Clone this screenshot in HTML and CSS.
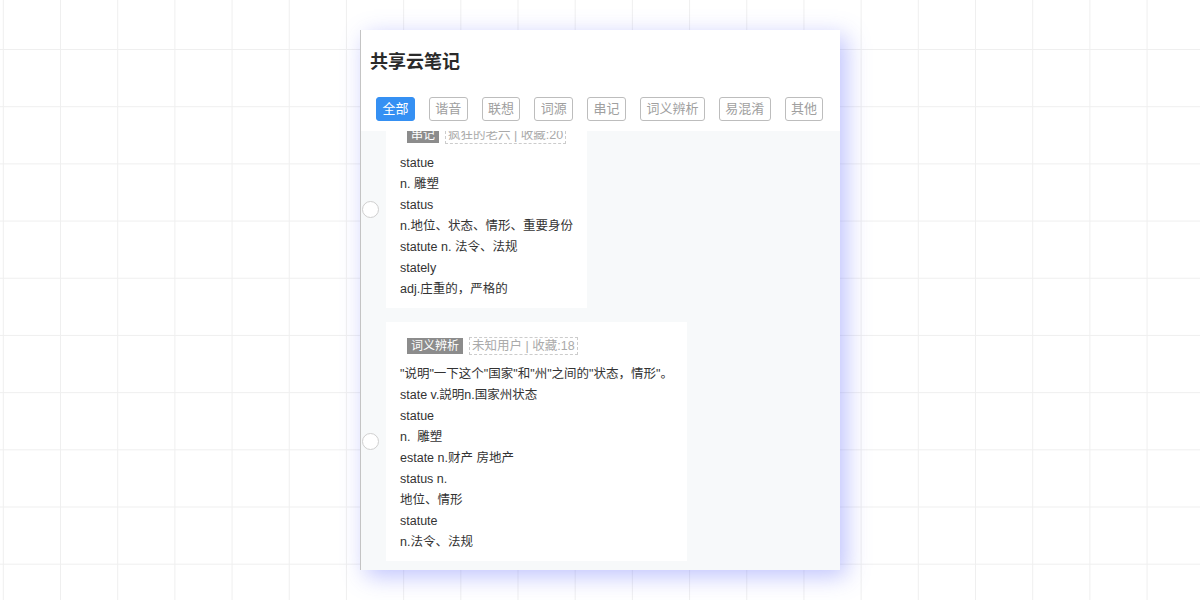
FILE: index.html
```html
<!DOCTYPE html>
<html lang="zh-CN">
<head>
  <meta charset="UTF-8" />
  <meta name="viewport" content="width=device-width, initial-scale=1.0" />
  <title>共享云笔记</title>
  <link rel="stylesheet" href="styles.css">
</head>
<body>
  <div class="panel">
    <div class="header">
      <h1 class="title">共享云笔记</h1>
      <div class="tabs">
        <span class="tab active">全部</span>
        <span class="tab">谐音</span>
        <span class="tab">联想</span>
        <span class="tab">词源</span>
        <span class="tab">串记</span>
        <span class="tab">词义辨析</span>
        <span class="tab">易混淆</span>
        <span class="tab">其他</span>
      </div>
    </div>

    <div class="content">
      <div class="list">
        <div class="row">
          <span class="radio"></span>
          <div class="card">
            <div class="meta">
              <span class="tag">串记</span>
              <span class="info">疯狂的老六 | 收藏:20</span>
            </div>
            <p>statue</p>
            <p>n. 雕塑</p>
            <p>status</p>
            <p>n.地位、状态、情形、重要身份</p>
            <p>statute n. 法令、法规</p>
            <p>stately</p>
            <p>adj.庄重的，严格的</p>
          </div>
        </div>

        <div class="row">
          <span class="radio"></span>
          <div class="card">
            <div class="meta">
              <span class="tag">词义辨析</span>
              <span class="info">未知用户 | 收藏:18</span>
            </div>
            <p>"说明"一下这个"国家"和"州"之间的"状态，情形"。</p>
            <p>state v.説明n.国家州状态</p>
            <p>statue</p>
            <p>n.&nbsp; 雕塑</p>
            <p>estate n.财产 房地产</p>
            <p>status n.</p>
            <p>地位、情形</p>
            <p>statute</p>
            <p>n.法令、法规</p>
          </div>
        </div>
      </div>
    </div>
  </div>
</body>
</html>
```

FILE: styles.css
```css
body {
  margin: 0;
  height: 600px;
  overflow: hidden;
  font-family: "Liberation Sans", "Noto Sans CJK SC", sans-serif;
  background-color: #ffffff;
  background-image:
    linear-gradient(to right, #efefef 1px, transparent 1px),
    linear-gradient(to bottom, #efefef 1px, transparent 1px);
  background-size: 57.2px 57.2px;
  background-position: 60px 49px;
}
.panel {
  width: 479px;
  height: 540px;
  margin: 30px auto 0 auto;
  background: #fff;
  border-left: 1px solid #c4c4c4;
  box-shadow: 6px 6px 22px rgba(110, 120, 250, 0.45);
  display: flex;
  flex-direction: column;
}
.header {
  background: #fff;
  padding: 20px 0 10px 0;
}
.title {
  margin: 0 0 0 9px;
  font-size: 18px;
  font-weight: 600;
  color: #2a2a2a;
  line-height: 24px;
}
.tabs {
  display: flex;
  gap: 14px;
  margin: 23px 0 0 15px;
}
.tab {
  font-size: 13px;
  line-height: 22px;
  padding: 0 5.4px;
  border: 1px solid #bdbdbd;
  border-radius: 3px;
  color: #a0a0a0;
}
.tab.active {
  background: #3590f3;
  border-color: #3590f3;
  color: #fff;
}
.content {
  flex: 1;
  background: #f7f9fa;
  overflow: hidden;
}
.list {
  margin-top: -20px;
  display: flex;
  flex-direction: column;
  gap: 14px;
}
.row {
  display: flex;
  align-items: center;
  gap: 7px;
}
.radio {
  width: 15px;
  height: 15px;
  margin-left: 1px;
  border: 1px solid #cfcfcf;
  border-radius: 50%;
  background: #fff;
}
.card {
  background: #fff;
  padding: 15px 14px 8px 14px;
}
.meta {
  display: flex;
  align-items: center;
  gap: 6px;
  margin: 0 0 9px 7px;
  height: 18px;
}
.tag {
  background: #8c8c8c;
  color: #fff;
  font-size: 12px;
  line-height: 16px;
  padding: 0 4px;
}
.info {
  border: 1px dashed #cccccc;
  color: #aaaaaa;
  font-size: 12.5px;
  line-height: 16px;
  padding: 0 2px;
}
.card p {
  margin: 0;
  font-size: 12.5px;
  line-height: 21px;
  color: #333;
}
```
